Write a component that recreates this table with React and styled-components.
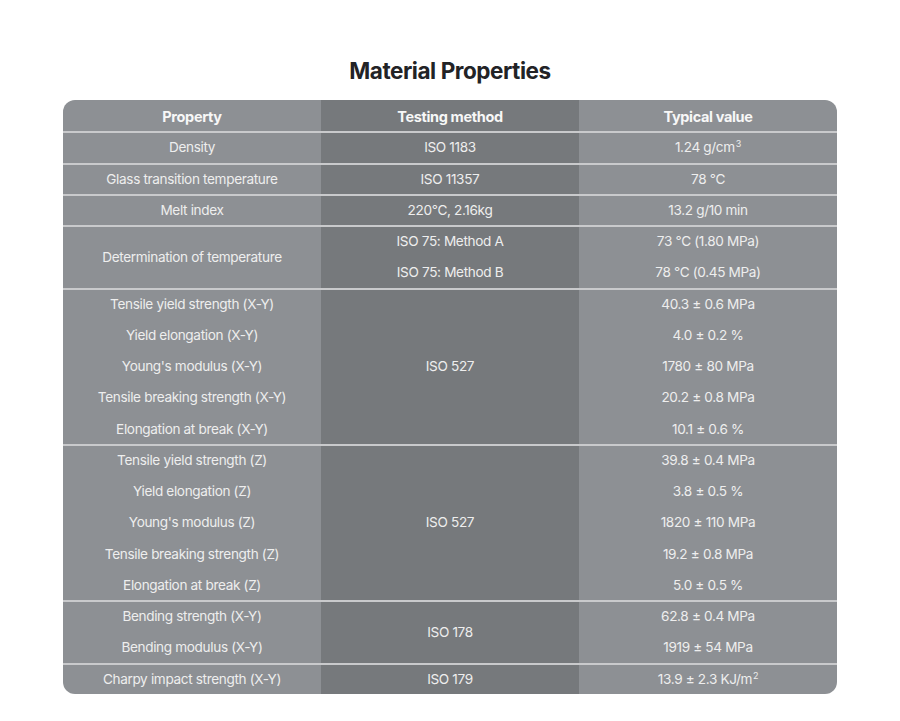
import { createGlobalStyle } from "styled-components";
import styled from "styled-components";

const GlobalStyle = createGlobalStyle`
  body {
    margin: 0;
    background: #ffffff;
    font-family: Inter, "Liberation Sans", sans-serif;
  }
`;

const Page = styled.div`
  display: flex;
  flex-direction: column;
  align-items: center;
  padding-top: 56px;
`;

const Title = styled.h1`
  margin: 0 0 15px;
  font-size: 22.5px;
  line-height: 29px;
  font-weight: 700;
  letter-spacing: -0.45px;
  color: #222326;
`;

const Table = styled.div`
  width: 774px;
  border-radius: 12px;
  overflow: hidden;
  background: #8d9094;
  color: #f2f2f2;
  letter-spacing: -0.35px;
`;

const Group = styled.div`
  display: grid;
  grid-template-columns: 258px 258px 258px;
  box-shadow: ${({ $first }) => ($first ? "none" : "inset 0 2px 0 #c9cacc")};
`;

const Column = styled.div`
  display: flex;
  flex-direction: column;
  justify-content: center;
  background: ${({ $mid }) => ($mid ? "#76797c" : "transparent")};
  ${({ $mid }) => $mid && "box-shadow: inherit;"}
`;

const Line = styled.div`
  box-sizing: border-box;
  height: 31.25px;
  display: flex;
  align-items: center;
  justify-content: center;
  padding-top: 1px;
  font-weight: ${({ $head }) => ($head ? 700 : 400)};
  font-size: ${({ $head }) => ($head ? "14.5px" : "13.6px")};
  color: ${({ $head }) => ($head ? "#f7f7f7" : "#eeeeee")};
`;

const Sup = styled.span`
  font-size: 9px;
  line-height: 10px;
  margin-left: 1px;
  align-self: flex-start;
  margin-top: 7px;
`;

const groups = [
  {
    props: ["Density"],
    methods: ["ISO 1183"],
    values: [
      <>
        1.24 g/cm<Sup>3</Sup>
      </>,
    ],
  },
  { props: ["Glass transition temperature"], methods: ["ISO 11357"], values: ["78 °C"] },
  { props: ["Melt index"], methods: ["220°C, 2.16kg"], values: ["13.2 g/10 min"] },
  {
    props: ["Determination of temperature"],
    methods: ["ISO 75: Method A", "ISO 75: Method B"],
    values: ["73 °C (1.80 MPa)", "78 °C (0.45 MPa)"],
  },
  {
    props: [
      "Tensile yield strength (X-Y)",
      "Yield elongation (X-Y)",
      "Young's modulus (X-Y)",
      "Tensile breaking strength (X-Y)",
      "Elongation at break (X-Y)",
    ],
    methods: ["ISO 527"],
    values: ["40.3 ± 0.6 MPa", "4.0 ± 0.2 %", "1780 ± 80 MPa", "20.2 ± 0.8 MPa", "10.1 ± 0.6 %"],
  },
  {
    props: [
      "Tensile yield strength (Z)",
      "Yield elongation (Z)",
      "Young's modulus (Z)",
      "Tensile breaking strength (Z)",
      "Elongation at break (Z)",
    ],
    methods: ["ISO 527"],
    values: ["39.8 ± 0.4 MPa", "3.8 ± 0.5 %", "1820 ± 110 MPa", "19.2 ± 0.8 MPa", "5.0 ± 0.5 %"],
  },
  {
    props: ["Bending strength (X-Y)", "Bending modulus (X-Y)"],
    methods: ["ISO 178"],
    values: ["62.8 ± 0.4 MPa", "1919 ± 54 MPa"],
  },
  {
    props: ["Charpy impact strength (X-Y)"],
    methods: ["ISO 179"],
    values: [
      <>
        13.9 ± 2.3 KJ/m<Sup>2</Sup>
      </>,
    ],
  },
];

export default function App() {
  return (
    <Page>
      <GlobalStyle />
      <Title>Material Properties</Title>
      <Table>
        <Group $first>
          <Column>
            <Line $head>Property</Line>
          </Column>
          <Column $mid>
            <Line $head>Testing method</Line>
          </Column>
          <Column>
            <Line $head>Typical value</Line>
          </Column>
        </Group>
        {groups.map((g, i) => (
          <Group key={i}>
            <Column>
              {g.props.map((p, j) => (
                <Line key={j}>{p}</Line>
              ))}
            </Column>
            <Column $mid>
              {g.methods.map((m, j) => (
                <Line key={j}>{m}</Line>
              ))}
            </Column>
            <Column>
              {g.values.map((v, j) => (
                <Line key={j}>{v}</Line>
              ))}
            </Column>
          </Group>
        ))}
      </Table>
    </Page>
  );
}
